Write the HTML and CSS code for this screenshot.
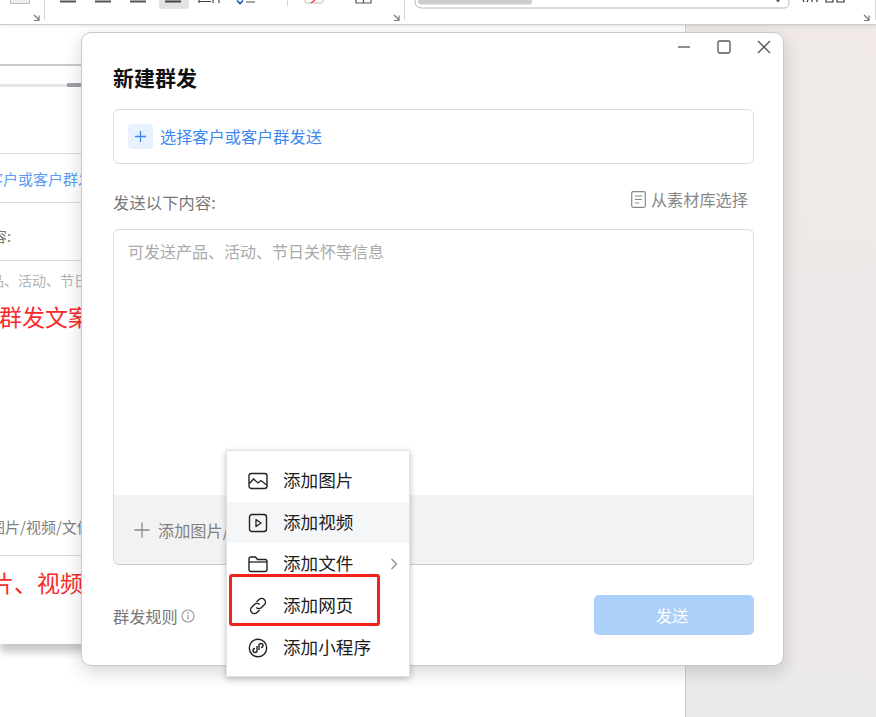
FILE: index.html
```html
<!DOCTYPE html>
<html lang="zh-CN">
<head>
<meta charset="utf-8">
<title>新建群发</title>
<link rel="stylesheet" href="styles.css">
</head>
<body>
<div class="desktop">
  <header class="ribbon">
    <svg class="ribbon-art" width="876" height="25" viewBox="0 0 876 25" fill="none">
      <path d="M10.5 0v3.5h19V0" fill="#eee" stroke="#bbb"/>
      <path d="M34 15l5 5M39 15.500v5h-5" stroke="#777" stroke-width="1.200"/>
      <path d="M44.500 0v20" stroke="#d5d5d5"/>
      <path d="M60 1.500h16M95 1.500h16M130 1.500h16" stroke="#555" stroke-width="2"/>
      <rect x="159" y="-6" width="30" height="15" rx="4" fill="#e3e3e3"/>
      <path d="M165 1.500h16" stroke="#444" stroke-width="2"/>
      <path d="M199 0v3M199 1.500h12M213 0v3M219 0v3" stroke="#444" stroke-width="1.200"/>
      <path d="M237 0.500l3 3 3-3" stroke="#1a56c4" stroke-width="1.600"/>
      <path d="M246 2h9" stroke="#666" stroke-width="1.200"/>
      <path d="M287.500 0v6" stroke="#d5d5d5"/>
      <path d="M305 0v1.500q0 1.500 1.500 1.500h15q1.500 0 1.500-1.500V0" stroke="#bbb"/>
      <path d="M311 3l4-3" stroke="#e33" stroke-width="1.200"/>
      <path d="M356 0v3h15V0M363.500 0v3" stroke="#555" stroke-width="1.200"/>
      <path d="M394 15l5 5M399 15.500v5h-5" stroke="#777" stroke-width="1.200"/>
      <path d="M404.500 0v20" stroke="#d5d5d5"/>
      <path d="M415 0v1q0 7 7 7h362q5 0 5-5V0" stroke="#bbb"/>
      <path d="M418 0v1q0 3.500 3.500 3.500H530q2 0 2-3V0" fill="#ccc"/>
      <circle cx="778" cy="0.500" r="1.500" fill="#555"/>
      <path d="M803 0l1 2M808 0l-1 2M812 2V0M817 2V0M826 0v2h7V0M837 0v2h7V0" stroke="#333" stroke-width="1.200"/>
      <path d="M864 15l5 5M869 15.500v5h-5" stroke="#777" stroke-width="1.200"/>
      <path d="M875.500 0v20" stroke="#d5d5d5"/>
    </svg>
  </header>

  <div class="doc-page">
    <div class="doc-rule doc-rule-top"></div>
    <div class="doc-rule doc-rule-low"><span class="doc-tag"></span></div>
  </div>

  <section class="back-window">
    <div class="back-spacer-a"></div>
    <div class="back-row back-blue">选择客户或客户群发送</div>
    <div class="back-row back-label">发送以下内容:</div>
    <div class="back-row back-hint">可发送产品、活动、节日关怀等信息</div>
    <div class="back-row back-red back-red-a">群发文案</div>
    <div class="back-row back-add">图片/视频/文件</div>
    <div class="back-row back-red back-red-b">图片、视频</div>
  </section>

  <section class="modal">
    <div class="win-controls">
      <svg width="14" height="14" viewBox="0 0 14 14" fill="none"><path d="M1 7h12" stroke="#555" stroke-width="1.300"/></svg>
      <svg width="14" height="14" viewBox="0 0 14 14" fill="none"><rect x="1" y="1" width="12" height="12" rx="1.500" stroke="#555" stroke-width="1.300"/></svg>
      <svg width="14" height="14" viewBox="0 0 14 14" fill="none"><path d="M1 1l12 12M13 1L1 13" stroke="#555" stroke-width="1.300"/></svg>
    </div>
    <h1 class="modal-title">新建群发</h1>
    <div class="recipient">
      <span class="plus-tile">
        <svg width="13" height="13" viewBox="0 0 13 13" fill="none"><path d="M6.500 1v11M1 6.500h11" stroke="#3a87f2" stroke-width="1.300"/></svg>
      </span>
      <span class="recipient-text">选择客户或客户群发送</span>
    </div>
    <div class="content-head">
      <span class="content-label">发送以下内容:</span>
      <span class="library">
        <svg width="15" height="17" viewBox="0 0 15 17" fill="none"><rect x="0.700" y="0.700" width="13.600" height="15.600" rx="1.500" stroke="#888" stroke-width="1.200"/><path d="M4 5h7M4 8.500h7M4 12h4" stroke="#888" stroke-width="1.100"/></svg>
        从素材库选择
      </span>
    </div>
    <div class="editor">
      <div class="editor-input">可发送产品、活动、节日关怀等信息</div>
      <div class="editor-tools">
        <svg width="16" height="16" viewBox="0 0 16 16" fill="none"><path d="M8 0.500v15M0.500 8h15" stroke="#888" stroke-width="1.300"/></svg>
        <span>添加图片/视频/文件</span>
      </div>
    </div>
    <footer class="modal-foot">
      <span class="rules">群发规则
        <svg width="14" height="14" viewBox="0 0 14 14" fill="none"><circle cx="7" cy="7" r="6" stroke="#999" stroke-width="1.100"/><path d="M7 6v4.500" stroke="#999" stroke-width="1.300"/><circle cx="7" cy="3.900" r="0.900" fill="#999"/></svg>
      </span>
      <button class="send" type="button">发送</button>
    </footer>
  </section>

  <nav class="menu">
    <div class="menu-item">
      <svg class="menu-icon" width="20" height="20" viewBox="0 0 20 20" fill="none"><rect x="1" y="2.500" width="18" height="15" rx="2.500" stroke="#222" stroke-width="1.400"/><path d="M1.500 12.500l4-4.500 4.500 4 3-2.500 5.500 4.500" stroke="#222" stroke-width="1.300"/></svg>
      <span class="menu-label">添加图片</span>
    </div>
    <div class="menu-item is-hover">
      <svg class="menu-icon" width="20" height="20" viewBox="0 0 20 20" fill="none"><rect x="1.500" y="1.500" width="17" height="17" rx="2.500" stroke="#222" stroke-width="1.400"/><path d="M8 6.500v7l5-3.500z" stroke="#222" stroke-width="1.300" stroke-linejoin="round"/></svg>
      <span class="menu-label">添加视频</span>
    </div>
    <div class="menu-item">
      <svg class="menu-icon" width="20" height="20" viewBox="0 0 20 20" fill="none"><path d="M1 5q0-2 2-2h4.500l2 2.500H17q2 0 2 2v8q0 2-2 2H3q-2 0-2-2z" stroke="#222" stroke-width="1.400"/><path d="M1 8h18" stroke="#222" stroke-width="1.300"/></svg>
      <span class="menu-label">添加文件</span>
      <svg class="menu-arrow" width="8" height="12" viewBox="0 0 8 12" fill="none"><path d="M1.500 1l5 5-5 5" stroke="#888" stroke-width="1.200"/></svg>
    </div>
    <div class="menu-item">
      <svg class="menu-icon" width="20" height="20" viewBox="0 0 20 20" fill="none"><path d="M8.500 6l2.500-2.500a3.700 3.700 0 0 1 5.300 5.300L13.500 11.500a3.700 3.700 0 0 1-5.200 0" stroke="#222" stroke-width="1.400"/><path d="M11.500 14l-2.500 2.500a3.700 3.700 0 0 1-5.300-5.300L6.500 8.500a3.700 3.700 0 0 1 5.200 0" stroke="#222" stroke-width="1.400"/></svg>
      <span class="menu-label">添加网页</span>
    </div>
    <div class="menu-item">
      <svg class="menu-icon" width="20" height="20" viewBox="0 0 20 20" fill="none"><circle cx="10" cy="10" r="8.700" stroke="#222" stroke-width="1.400"/><path d="M9 8v4.500a2 2 0 1 1-2-2M11 12V7.500a2 2 0 1 1 2 2" stroke="#222" stroke-width="1.400"/></svg>
      <span class="menu-label">添加小程序</span>
    </div>
    <div class="highlight"></div>
  </nav>
</div>
</body>
</html>
```

FILE: styles.css
```css
* { box-sizing: border-box; }
html, body { margin: 0; padding: 0; }
body {
  font-family: "Noto Sans CJK SC", "Noto Sans", sans-serif;
  overflow: hidden;
}
.desktop {
  position: relative;
  width: 876px;
  height: 717px;
  overflow: hidden;
  background: linear-gradient(180deg, #f0e9e8 0%, #ece9e9 100%);
}

/* ribbon */
.ribbon {
  height: 25px;
  background: #fff;
  border-bottom: 1px solid #cfcdcc;
  box-shadow: 0 1px 3px rgba(0, 0, 0, .1);
  position: relative;
  z-index: 1;
}
.ribbon-art { display: block; }

/* document behind */
.doc-page {
  position: absolute;
  left: 0;
  top: 25px;
  width: 686px;
  height: 692px;
  background: #fff;
  border-right: 1px solid #cfcdcd;
}
.doc-rule { position: absolute; left: 0; right: 0; }
.doc-rule-top { top: 39px; height: 2px; background: #c9c9c9; }
.doc-rule-low { top: 59px; height: 3px; background: #e6e6e6; }
.doc-tag {
  position: absolute;
  left: 67px;
  top: -1px;
  width: 14px;
  height: 4px;
  background: #9a9fa8;
}

/* window behind the modal */
.back-window {
  position: absolute;
  left: 0;
  top: 87px;
  width: 90px;
  height: 557px;
  background: #fff;
  box-shadow: 0 8px 8px rgba(0, 0, 0, .22);
  overflow: hidden;
  white-space: nowrap;
}
.back-spacer-a { height: 67px; border-bottom: 1px solid #dcdcdc; }
.back-row { font-size: 15px; }
.back-blue {
  height: 48px;
  line-height: 50px;
  margin-left: -42px;
  color: #5b9bf3;
}
.back-label {
  height: 58px;
  padding-top: 22px;
  line-height: 22px;
  margin-left: -83px;
  color: #777;
  border-top: 1px solid #dcdcdc;
}
.back-hint {
  height: 40px;
  padding-top: 9px;
  line-height: 20px;
  margin-left: -66px;
  color: #b3b3b3;
  font-size: 14px;
  border-top: 1px solid #dcdcdc;
}
.back-red { color: #fb2a2a; font-size: 23px; line-height: 32px; }
.back-red-a { margin-left: -1px; height: 210px; }
.back-add {
  height: 46px;
  line-height: 22px;
  padding-top: 6px;
  margin-left: -10px;
  color: #808080;
  border-bottom: 1px solid #dcdcdc;
}
.back-red-b { margin-left: -32px; padding-top: 10px; height: 50px; }

/* modal */
.modal {
  position: absolute;
  left: 81px;
  top: 32px;
  width: 703px;
  height: 634px;
  background: #fff;
  border: 1px solid #c9c9c9;
  border-radius: 10px;
  box-shadow: 0 6px 18px rgba(0, 0, 0, .16);
  padding: 0 29px 0 31px;
  display: flex;
  flex-direction: column;
}
.win-controls {
  display: flex;
  justify-content: flex-end;
  gap: 26px;
  height: 14px;
  margin-top: 7px;
  margin-right: -17px;
}
.modal-title {
  margin: 4px 0 0;
  height: 40px;
  line-height: 38px;
  font-size: 21px;
  font-weight: 700;
  color: #111;
}
.recipient {
  margin-top: 11px;
  height: 55px;
  border: 1px solid #dcdcdc;
  border-radius: 6px;
  display: flex;
  align-items: center;
  padding-left: 14px;
}
.plus-tile {
  width: 25px;
  height: 25px;
  border-radius: 4px;
  background: #e8f1fe;
  display: flex;
  align-items: center;
  justify-content: center;
  margin-right: 7px;
}
.recipient-text { font-size: 16.200px; line-height: 24px; padding-bottom: 2px; color: #3a87f2; }
.content-head {
  margin-top: 25px;
  height: 40px;
  display: flex;
  justify-content: space-between;
  align-items: flex-start;
}
.content-label { font-size: 16.200px; line-height: 26px; color: #777; letter-spacing: .2px; }
.library {
  font-size: 16.200px;
  line-height: 20px;
  color: #888;
  display: flex;
  align-items: center;
  gap: 5px;
  padding-right: 6px;
}
.library svg { margin-right: 0; }
.editor {
  height: 336px;
  border: 1px solid #dcdcdc;
  border-bottom-color: #cacaca;
  border-radius: 6px;
  display: flex;
  flex-direction: column;
  overflow: hidden;
}
.editor-input {
  flex: 1;
  padding: 8px 14px;
  line-height: 26px;
  font-size: 16px;
  color: #aaa;
}
.editor-tools {
  height: 69px;
  background: #f2f2f2;
  display: flex;
  align-items: center;
  gap: 8px;
  padding-left: 20px;
  font-size: 16.200px;
  color: #808080;
}
.modal-foot {
  margin-top: 30px;
  display: flex;
  justify-content: space-between;
  align-items: center;
}
.rules {
  display: flex;
  align-items: center;
  gap: 3px;
  padding-top: 2px;
  font-size: 16.200px;
  color: #777;
}
.send {
  width: 160px;
  height: 40px;
  border: 0;
  border-radius: 5px;
  padding: 0 4px 0 0;
  background: #acd0fa;
  color: #fff;
  font: inherit;
  font-size: 16.200px;
}

/* context menu */
.menu {
  position: absolute;
  left: 226px;
  top: 450px;
  width: 184px;
  height: 227px;
  padding: 9px 0;
  background: #fff;
  border: 1px solid #e2e2e2;
  box-shadow: 0 2px 6px rgba(0, 0, 0, .25);
}
.menu-item {
  height: 41.700px;
  display: flex;
  align-items: center;
  padding-left: 21px;
  font-size: 17.600px;
  color: #1c1c1c;
  position: relative;
}
.menu-item.is-hover { background: #f5f6f8; }
.menu-label { padding-bottom: 2px; line-height: 26px; }
.menu-icon { margin-right: 15px; flex: none; }
.menu-arrow { position: absolute; right: 11px; top: 15px; }
.highlight {
  position: absolute;
  left: 2px;
  top: 123px;
  width: 151px;
  height: 52px;
  border: 3px solid #f5201c;
  border-radius: 3px;
}
```
